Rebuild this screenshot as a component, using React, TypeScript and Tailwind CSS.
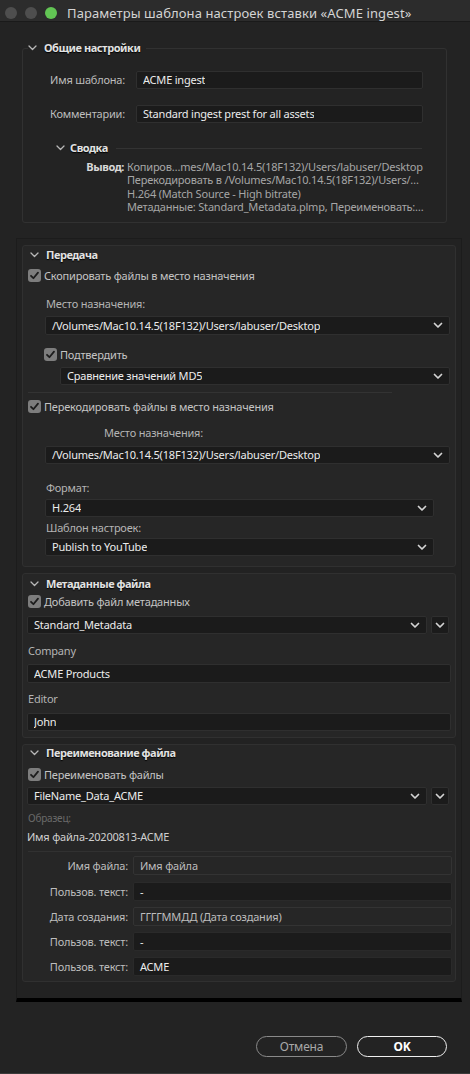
import React from "react";

const Chev = ({ c = "#b8b8b8", w = 9 }: { c?: string; w?: number }) => (
  <svg width={w} height={6} viewBox="0 0 9 6" className="shrink-0">
    <path d="M1 1 L4.5 4.5 L8 1" fill="none" stroke={c} strokeWidth={1.3} strokeLinecap="round" strokeLinejoin="round" />
  </svg>
);

const SelChev = () => (
  <svg width={10} height={7} viewBox="0 0 10 7" className="shrink-0">
    <path d="M1.5 1.5 L5 5 L8.5 1.5" fill="none" stroke="#d4d4d4" strokeWidth={1.7} strokeLinecap="round" strokeLinejoin="round" />
  </svg>
);

const Check = () => (
  <div className="w-[13px] h-[13px] rounded-[3px] bg-[#7d7d7d] flex items-center justify-center shrink-0">
    <svg width={11} height={11} viewBox="0 0 11 11">
      <path d="M2 5.8 L4.4 8.2 L9 2.6" fill="none" stroke="#1c1c1c" strokeWidth={1.8} strokeLinecap="round" strokeLinejoin="round" />
    </svg>
  </div>
);

const Sel = ({ text, cls }: { text: string; cls: string }) => (
  <div className={`flex items-center justify-between bg-[#1b1b1b] border border-[#2f2f2f] rounded-[2px] pl-[6px] pr-[6px] text-[#ececec] ${cls}`}>
    <span className="truncate">{text}</span>
    <SelChev />
  </div>
);

const Inp = ({ text, cls }: { text: string; cls: string }) => (
  <div className={`flex items-center bg-[#1b1b1b] border border-[#2f2f2f] rounded-[2px] pl-[6px] text-[#ececec] ${cls}`}>
    <span className="truncate">{text}</span>
  </div>
);

const Bold = ({ t }: { t: string }) => (
  <span className="font-bold tracking-[-0.45px] text-[#e2e2e2] [text-shadow:0_1px_1px_#000]">{t}</span>
);

const PanelHead = ({ title }: { title: string }) => (
  <div className="flex items-center h-[15px] pl-[7px] gap-[7px]">
    <Chev />
    <Bold t={title} />
  </div>
);

const CheckRow = ({ label, cls }: { label: string; cls: string }) => (
  <div className={`flex items-center gap-[3px] h-[13px] ${cls}`}>
    <Check />
    <span className="text-[#c4c4c4]">{label}</span>
  </div>
);

const RenRow = ({ label, value, light, cls }: { label: string; value: string; light?: boolean; cls: string }) => (
  <div className={`flex items-center ${cls}`}>
    <div className="w-[105px] text-right text-[#bdbdbd]">{label}</div>
    <div
      className={`ml-[5px] w-[319px] h-[19px] flex items-center pl-[6px] rounded-[2px] border ${
        light ? "bg-[#262626] border-[#333333] text-[#bdbdbd]" : "bg-[#1b1b1b] border-[#2a2a2a] text-[#ececec]"
      }`}
    >
      {value}
    </div>
  </div>
);

export default function App() {
  return (
    <div className="w-[470px] h-[1074px] bg-[#232323] flex flex-col overflow-hidden text-[11px] leading-[14px] tracking-[-0.2px] text-[#c4c4c4] font-['Noto_Sans','Open_Sans',sans-serif]">
      {/* Title bar */}
      <div className="h-[22px] shrink-0 bg-[#2c2c2c] border-b border-[#1a1a1a] flex items-center pt-[4px]">
        <div className="ml-[5px] w-[12px] h-[12px] rounded-full bg-[#4e4e4e]" />
        <div className="ml-[8px] w-[12px] h-[12px] rounded-full bg-[#4e4e4e]" />
        <div className="ml-[8px] w-[12px] h-[12px] rounded-full bg-[#62c554]" />
        <div className="ml-[10px] text-[13px] tracking-[0.1px] text-[#d4d4d4]">Параметры шаблона настроек вставки «ACME ingest»</div>
      </div>

      {/* General settings */}
      <fieldset className="mt-[19px] ml-[22px] w-[425px] shrink-0 border border-[#313131] rounded-[3px] pb-[9px]">
        <legend className="ml-[5px] pr-[6px] flex items-center gap-[7px] h-[14px]">
          <Chev />
          <Bold t="Общие настройки" />
        </legend>
        <div className="flex items-center mt-[16px]">
          <div className="w-[102px] text-right text-[#bdbdbd]">Имя шаблона:</div>
          <Inp text="ACME ingest" cls="ml-[11px] w-[287px] h-[18px]" />
        </div>
        <div className="flex items-center mt-[16px]">
          <div className="w-[102px] text-right text-[#bdbdbd]">Комментарии:</div>
          <Inp text="Standard ingest prest for all assets" cls="ml-[11px] w-[287px] h-[18px]" />
        </div>
        <div className="flex items-center mt-[18px] h-[14px] ml-[33px] w-[366px]">
          <Chev />
          <span className="ml-[5px]">
            <Bold t="Сводка" />
          </span>
          <div className="ml-[8px] flex-1 h-px bg-[#333333]" />
        </div>
        <div className="flex mt-[5px] leading-[13.3px]">
          <div className="w-[101px] text-right font-bold tracking-[-0.4px] text-[#d8d8d8]">Вывод:</div>
          <div className="ml-[3px] text-[#a6a6a6] w-[300px] whitespace-nowrap">
            <div>Копиров…mes/Mac10.14.5(18F132)/Users/labuser/Desktop</div>
            <div>Перекодировать в /Volumes/Mac10.14.5(18F132)/Users/…</div>
            <div>H.264 (Match Source - High bitrate)</div>
            <div>Метаданные: Standard_Metadata.plmp, Переименовать:…</div>
          </div>
        </div>
      </fieldset>

      {/* Scroll area */}
      <div className="mt-[15px] ml-[16px] w-[446px] h-[764px] shrink-0 border border-[#1c1c1c] border-b-[4px] border-b-black bg-[#222222] pl-[5px] pt-[6px] flex flex-col gap-[6px] overflow-hidden">
        {/* Передача */}
        <div className="w-[434px] shrink-0 border border-[#303030] rounded-[3px] bg-[#262626] pt-[1px] pb-[10px]">
          <PanelHead title="Передача" />
          <CheckRow label="Скопировать файлы в место назначения" cls="mt-[7px] ml-[5px]" />
          <div className="mt-[15px] ml-[23px] text-[#b4b4b4]">Место назначения:</div>
          <Sel text="/Volumes/Mac10.14.5(18F132)/Users/labuser/Desktop" cls="mt-[5px] ml-[22px] w-[405px] h-[19px]" />
          <CheckRow label="Подтвердить" cls="mt-[13px] ml-[21px]" />
          <Sel text="Сравнение значений MD5" cls="mt-[6px] ml-[37px] w-[390px] h-[18px]" />
          <div className="mt-[7px] ml-[5px] w-[364px] h-px bg-[#333333]" />
          <CheckRow label="Перекодировать файлы в место назначения" cls="mt-[7px] ml-[5px]" />
          <div className="mt-[13px] ml-[81px] text-[#b4b4b4]">Место назначения:</div>
          <Sel text="/Volumes/Mac10.14.5(18F132)/Users/labuser/Desktop" cls="mt-[6px] ml-[22px] w-[405px] h-[18px]" />
          <div className="mt-[17px] ml-[23px] text-[#b4b4b4]">Формат:</div>
          <Sel text="H.264" cls="mt-[4px] ml-[22px] w-[389px] h-[18px]" />
          <div className="mt-[4px] ml-[23px] text-[#b4b4b4]">Шаблон настроек:</div>
          <Sel text="Publish to YouTube" cls="mt-[3px] ml-[22px] w-[389px] h-[18px]" />
        </div>

        {/* Метаданные файла */}
        <div className="w-[434px] shrink-0 border border-[#303030] rounded-[3px] bg-[#262626] pb-[6px]">
          <div className="mt-[2px]">
            <PanelHead title="Метаданные файла" />
          </div>
          <CheckRow label="Добавить файл метаданных" cls="mt-[4px] ml-[5px]" />
          <div className="mt-[8px] ml-[4px] flex gap-[4px]">
            <Sel text="Standard_Metadata" cls="w-[400px] h-[18px]" />
            <div className="w-[18px] h-[18px] bg-[#1b1b1b] border border-[#2f2f2f] rounded-[2px] flex items-center justify-center">
              <SelChev />
            </div>
          </div>
          <div className="mt-[10px] ml-[5px] text-[#b4b4b4]">Company</div>
          <Inp text="ACME Products" cls="mt-[6px] ml-[4px] w-[424px] h-[19px]" />
          <div className="mt-[9px] ml-[5px] text-[#b4b4b4]">Editor</div>
          <Inp text="John" cls="mt-[7px] ml-[4px] w-[424px] h-[18px]" />
        </div>

        {/* Переименование файла */}
        <div className="w-[434px] shrink-0 border border-[#303030] rounded-[3px] bg-[#262626] pb-[5px]">
          <PanelHead title="Переименование файла" />
          <CheckRow label="Переименовать файлы" cls="mt-[8px] ml-[5px]" />
          <div className="mt-[6px] ml-[4px] flex gap-[4px]">
            <Sel text="FileName_Data_ACME" cls="w-[400px] h-[18px]" />
            <div className="w-[18px] h-[18px] bg-[#1b1b1b] border border-[#2f2f2f] rounded-[2px] flex items-center justify-center">
              <SelChev />
            </div>
          </div>
          <div className="mt-[7px] ml-[5px] text-[10px] leading-[12px] text-[#6a6a6a]">Образец:</div>
          <div className="mt-[6px] ml-[4px] text-[#d0d0d0]">Имя файла-20200813-ACME</div>
          <div className="mt-[7px] ml-[5px] w-[424px] h-px bg-[#313131]" />
          <RenRow label="Имя файла:" value="Имя файла" light cls="mt-[4px]" />
          <RenRow label="Пользов. текст:" value="-" cls="mt-[7px]" />
          <RenRow label="Дата создания:" value="ГГГГММДД (Дата создания)" light cls="mt-[6px]" />
          <RenRow label="Пользов. текст:" value="-" cls="mt-[6px]" />
          <RenRow label="Пользов. текст:" value="ACME" cls="mt-[6px]" />
        </div>
      </div>

      {/* Footer */}
      <div className="flex-1 relative border-b border-[#3a3a3a] bg-[#232323]">
        <div className="absolute left-[256px] top-[34px] flex gap-[10px]">
          <div className="w-[91px] h-[21px] rounded-full border-[1.5px] border-[#8a8a8a] flex items-center justify-center text-[12px] text-[#a8a8a8]">Отмена</div>
          <div className="w-[90px] h-[21px] rounded-full border-[1.5px] border-[#f0f0f0] flex items-center justify-center text-[12px] font-bold text-white">OK</div>
        </div>
      </div>
    </div>
  );
}
